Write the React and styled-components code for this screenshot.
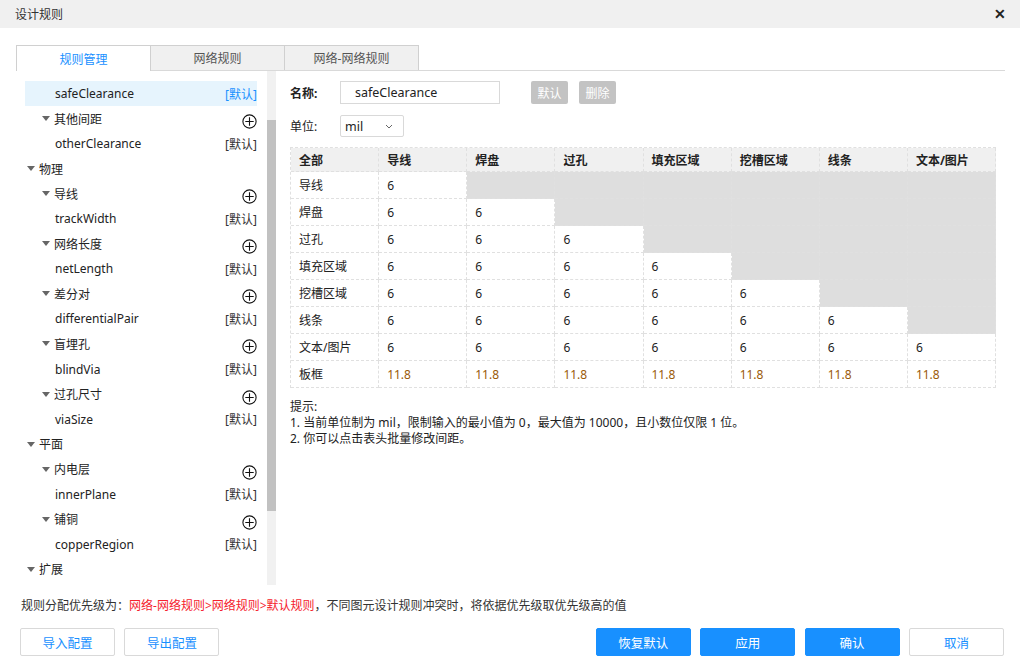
import React from 'react';
import styled, { createGlobalStyle } from 'styled-components';

const GlobalStyle = createGlobalStyle`
  html, body {
    margin: 0;
    padding: 0;
    background: #fff;
  }
  body {
    font-family: "Noto Sans", "Noto Sans CJK SC", sans-serif;
    font-size: 12px;
    color: #333;
  }
`;

const Dialog = styled.div`
  width: 1020px;
  height: 670px;
  display: flex;
  flex-direction: column;
  background: #fff;
  overflow: hidden;
`;

const TitleBar = styled.div`
  height: 28px;
  background: #f0f0f0;
  display: flex;
  align-items: center;
  justify-content: space-between;
  padding: 0 14px 0 15px;
  font-size: 12px;
  color: #333;
`;

const Close = styled.span`
  font-size: 14px;
  font-weight: bold;
  color: #222;
  line-height: 1;
`;

const Body = styled.div`
  flex: 1;
  display: flex;
  flex-direction: column;
  padding: 17px 15px 0 16px;
`;

const Tabs = styled.div`
  display: flex;
  height: 25px;
  border-bottom: 1px solid #d9d9d9;
`;

const Tab = styled.div`
  width: 135px;
  box-sizing: border-box;
  display: flex;
  align-items: center;
  justify-content: center;
  border: 1px solid #d0d0d0;
  border-bottom: none;
  margin-left: ${p => (p.$first ? '0' : '-1px')};
  background: ${p => (p.$active ? '#fff' : '#f0f0f0')};
  color: ${p => (p.$active ? '#1890ff' : '#555')};
  margin-bottom: ${p => (p.$active ? '-1px' : '0')};
`;

const Main = styled.div`
  display: flex;
  height: 517px;
`;

const LeftPanel = styled.div`
  width: 260px;
  display: flex;
  gap: 10px;
  padding-left: 9px;
  box-sizing: border-box;
`;

const Tree = styled.div`
  width: 232px;
  padding-top: 10px;
  display: flex;
  flex-direction: column;
`;

const Row = styled.div`
  height: 25.05px;
  display: flex;
  align-items: center;
  padding-left: ${p => p.$indent}px;
  background: ${p => (p.$selected ? '#e6f4fd' : 'transparent')};
  color: #222;
`;

const Caret = styled.span`
  width: 0;
  height: 0;
  border-left: 4px solid transparent;
  border-right: 4px solid transparent;
  border-top: 5px solid #666;
  margin-right: 4px;
`;

const Label = styled.span`
  flex: 1;
`;

const Default = styled.span`
  color: ${p => (p.$active ? '#1890ff' : '#333')};
`;

const PlusWrap = styled.span`
  display: flex;
  margin-top: 6px;
`;

const ScrollTrack = styled.div`
  width: 9px;
  background: #f1f1f1;
  display: flex;
  flex-direction: column;
  height: 514px;
`;

const ScrollThumb = styled.div`
  margin-top: 49px;
  height: 391px;
  background: #c1c1c1;
`;

const RightPanel = styled.div`
  flex: 1;
  padding: 10px 0 0 14px;
  display: flex;
  flex-direction: column;
`;

const FieldRow = styled.div`
  display: flex;
  align-items: center;
  height: ${p => p.$h}px;
  margin-bottom: ${p => p.$mb || 0}px;
`;

const FieldLabel = styled.span`
  width: 50px;
  font-weight: ${p => (p.$bold ? 'bold' : 'normal')};
  color: #222;
`;

const TextInput = styled.div`
  width: 160px;
  height: 23px;
  box-sizing: border-box;
  border: 1px solid #d9d9d9;
  padding-left: 14px;
  display: flex;
  align-items: center;
  color: #222;
  font-size: 12.5px;
`;

const GrayButton = styled.div`
  width: 37px;
  height: 23px;
  background: #c3c3c3;
  color: #fff;
  border-radius: 2px;
  display: flex;
  align-items: center;
  justify-content: center;
  margin-left: ${p => p.$ml}px;
`;

const Select = styled.div`
  width: 64px;
  height: 22px;
  box-sizing: border-box;
  border: 1px solid #d9d9d9;
  border-radius: 2px;
  display: flex;
  align-items: center;
  justify-content: space-between;
  padding: 0 10px 0 4px;
  color: #222;
  font-size: 12.5px;
`;

const Table = styled.div`
  width: 705px;
  display: grid;
  grid-template-columns: repeat(8, 1fr);
  border-top: 1px dashed #e0e0e0;
  border-left: 1px dashed #e0e0e0;
`;

const Cell = styled.div`
  height: ${p => (p.$head ? 23 : 26)}px;
  display: flex;
  align-items: center;
  padding-left: 8px;
  border-right: 1px dashed #e0e0e0;
  border-bottom: 1px dashed #e0e0e0;
  background: ${p => (p.$head ? '#f0f0f0' : p.$off ? '#dedede' : '#fff')};
  font-weight: ${p => (p.$head ? 'bold' : 'normal')};
  color: ${p => (p.$warn ? '#9a5a08' : '#222')};
`;

const Hint = styled.div`
  margin-top: 11px;
  line-height: 16px;
  color: #222;
`;

const Priority = styled.div`
  margin-top: 8px;
  padding-left: 5px;
  color: #333;
`;

const Red = styled.span`
  color: #f5222d;
`;

const Footer = styled.div`
  display: flex;
  align-items: center;
  gap: 9.4px;
  margin-top: 14px;
  padding-left: 4px;
  padding-right: 1px;
`;

const Button = styled.div`
  width: 95px;
  height: 28px;
  box-sizing: border-box;
  border-radius: 2px;
  display: flex;
  align-items: center;
  justify-content: center;
  font-size: 12.5px;
  background: ${p => (p.$primary ? '#1890ff' : '#fff')};
  color: ${p => (p.$primary ? '#fff' : '#1890ff')};
  border: 1px solid ${p => (p.$primary ? '#1890ff' : '#d9d9d9')};
  margin-left: ${p => (p.$push ? 'auto' : '0')};
`;

function PlusIcon() {
  return (
    <svg width="15" height="15" viewBox="0 0 15 15">
      <circle cx="7.5" cy="7.5" r="6.6" fill="none" stroke="#111" strokeWidth="1.1" />
      <path d="M7.5 3.3v8.4M3.3 7.5h8.4" stroke="#111" strokeWidth="1.1" />
    </svg>
  );
}

function Chevron() {
  return (
    <svg width="8" height="5" viewBox="0 0 8 5">
      <path d="M1 1l3 3 3-3" fill="none" stroke="#666" strokeWidth="1" />
    </svg>
  );
}

const treeRows = [
  { t: 'leaf', label: 'safeClearance', selected: true },
  { t: 'group', label: '其他间距' },
  { t: 'leaf', label: 'otherClearance' },
  { t: 'root', label: '物理' },
  { t: 'group', label: '导线' },
  { t: 'leaf', label: 'trackWidth' },
  { t: 'group', label: '网络长度' },
  { t: 'leaf', label: 'netLength' },
  { t: 'group', label: '差分对' },
  { t: 'leaf', label: 'differentialPair' },
  { t: 'group', label: '盲埋孔' },
  { t: 'leaf', label: 'blindVia' },
  { t: 'group', label: '过孔尺寸' },
  { t: 'leaf', label: 'viaSize' },
  { t: 'root', label: '平面' },
  { t: 'group', label: '内电层' },
  { t: 'leaf', label: 'innerPlane' },
  { t: 'group', label: '铺铜' },
  { t: 'leaf', label: 'copperRegion' },
  { t: 'root', label: '扩展' },
];

const indents = { root: 2, group: 17, leaf: 30 };

const kinds = ['导线', '焊盘', '过孔', '填充区域', '挖槽区域', '线条', '文本/图片'];

function App() {
  return (
    <Dialog>
      <GlobalStyle />
      <TitleBar>
        <span>设计规则</span>
        <Close>✕</Close>
      </TitleBar>
      <Body>
        <Tabs>
          <Tab $first $active>规则管理</Tab>
          <Tab>网络规则</Tab>
          <Tab>网络-网络规则</Tab>
        </Tabs>
        <Main>
          <LeftPanel>
            <Tree>
              {treeRows.map((r, i) => (
                <Row key={i} $indent={indents[r.t]} $selected={r.selected}>
                  {r.t !== 'leaf' && <Caret />}
                  <Label>{r.label}</Label>
                  {r.t === 'leaf' && <Default $active={r.selected}>[默认]</Default>}
                  {r.t === 'group' && (
                    <PlusWrap>
                      <PlusIcon />
                    </PlusWrap>
                  )}
                </Row>
              ))}
            </Tree>
            <ScrollTrack>
              <ScrollThumb />
            </ScrollTrack>
          </LeftPanel>
          <RightPanel>
            <FieldRow $h={23} $mb={11}>
              <FieldLabel $bold>名称:</FieldLabel>
              <TextInput>safeClearance</TextInput>
              <GrayButton $ml={31}>默认</GrayButton>
              <GrayButton $ml={11}>删除</GrayButton>
            </FieldRow>
            <FieldRow $h={22} $mb={10}>
              <FieldLabel>单位:</FieldLabel>
              <Select>
                <span>mil</span>
                <Chevron />
              </Select>
            </FieldRow>
            <Table>
              <Cell $head>全部</Cell>
              {kinds.map(k => (
                <Cell key={k} $head>{k}</Cell>
              ))}
              {kinds.map((k, ri) => (
                <React.Fragment key={k}>
                  <Cell>{k}</Cell>
                  {kinds.map((c, ci) => (
                    <Cell key={c} $off={ci > ri}>{ci <= ri ? '6' : ''}</Cell>
                  ))}
                </React.Fragment>
              ))}
              <Cell>板框</Cell>
              {kinds.map(c => (
                <Cell key={c} $warn>11.8</Cell>
              ))}
            </Table>
            <Hint>
              <div>提示:</div>
              <div>1. 当前单位制为 mil，限制输入的最小值为 0，最大值为 10000，且小数位仅限 1 位。</div>
              <div>2. 你可以点击表头批量修改间距。</div>
            </Hint>
          </RightPanel>
        </Main>
        <Priority>
          规则分配优先级为：<Red>网络-网络规则&gt;网络规则&gt;默认规则</Red>，不同图元设计规则冲突时，将依据优先级取优先级高的值
        </Priority>
        <Footer>
          <Button>导入配置</Button>
          <Button>导出配置</Button>
          <Button $primary $push>恢复默认</Button>
          <Button $primary>应用</Button>
          <Button $primary>确认</Button>
          <Button>取消</Button>
        </Footer>
      </Body>
    </Dialog>
  );
}

export default App;
